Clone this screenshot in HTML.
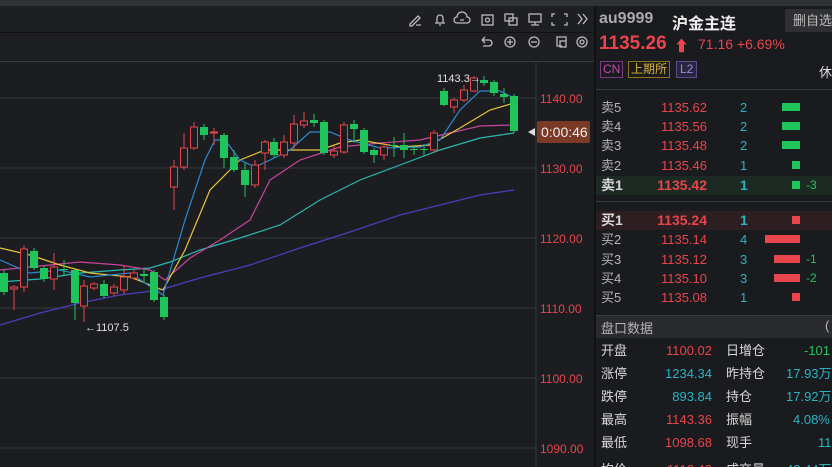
<!DOCTYPE html>
<html><head><meta charset="utf-8"><style>
*{margin:0;padding:0;box-sizing:border-box}
html,body{width:832px;height:467px;overflow:hidden}
body{background:#1c1d20;position:relative;font-family:"Liberation Sans","Noto Sans CJK SC",sans-serif}
.a{position:absolute;white-space:nowrap}
.r{color:#e8454c}.g{color:#1fc45a}.c{color:#2ab3c2}.w{color:#d8d8d8}.l{color:#b5b5b5}
.row{position:absolute;left:596px;width:236px;height:19px;font-size:13px;line-height:19px}
.row span{position:absolute}
.row .p{right:125px}
.row .v{right:120px;font-size:13px}
</style></head><body>
<div class="a" style="left:0;top:0;width:832px;height:6px;background:#303236"></div>
<div class="a" style="left:0;top:6px;width:596px;height:26px;background:#1e1f22"></div>
<div class="a" style="left:0;top:32px;width:596px;height:1px;background:#111"></div>
<div class="a" style="left:0;top:33px;width:596px;height:28px;background:#1e1f22"></div>
<div class="a" style="left:0;top:61px;width:596px;height:1px;background:#3a3b3e"></div>
<svg class="a" style="left:400px;top:0" width="196" height="62" fill="none" stroke="#bbb" stroke-width="1.3">
<path d="M10 24l8-8 2 2-8 8h-2zM16 25h5"/>
<path d="M35 23h10M37 23v-5a3 3 0 0 1 6 0v5M39 25h2"/>
<path d="M57 23h10a3 3 0 0 0 0-6 5 5 0 0 0-10 0 3 3 0 0 0 0 6zM60 20h4"/>
<rect x="82" y="15" width="11" height="10"/><circle cx="87.5" cy="20" r="2"/>
<rect x="105" y="14" width="8" height="7"/><rect x="109" y="18" width="8" height="7"/>
<rect x="129" y="14" width="12" height="8"/><path d="M135 22v3M131 25h8"/>
<path d="M152 17v-3h3M164 14h3v3M167 22v3h-3M155 25h-3v-3"/>
<path d="M178 14l4 5-4 5M183 14l4 5-4 5"/>
<path d="M82 40h7a3 3 0 0 1 0 6h-6M82 40l3-3M82 40l3 3"/>
<circle cx="110" cy="42" r="5"/><path d="M107 42h6M110 39v6"/>
<circle cx="134" cy="42" r="5"/><path d="M131 42h6"/>
<path d="M162 46h-5v-9h9v4"/><rect x="160" y="41" width="6" height="6"/>
<circle cx="182" cy="42" r="5"/><circle cx="182" cy="42" r="2"/>
</svg>
<svg class="a" style="left:0;top:62px" width="596" height="405">
<g stroke="#34363a" stroke-width="1">
<path d="M0 36h536M0 106h536M0 176h536M0 246h536M0 316h536M0 386h536M536 0v405"/>
</g>
<g font-size="12" fill="#e8454c" font-family="Liberation Sans">
<text x="540" y="41">1140.00</text><text x="540" y="111">1130.00</text><text x="540" y="181">1120.00</text><text x="540" y="251">1110.00</text><text x="540" y="321">1100.00</text><text x="540" y="391">1090.00</text>
</g>
<g transform="translate(0,-62)" fill="none" stroke-width="1.2">
<polyline stroke="#4a3fbf" points="0,325 40,313 80,303 120,295 160,290 200,278 250,265 300,248 350,232 400,215 440,205 480,195 514,190"/>
<polyline stroke="#29b8b0" points="0,282 40,279 80,273 120,270 150,268 170,262 200,250 240,238 280,225 320,200 360,180 400,165 440,150 480,138 514,133"/>
<polyline stroke="#c9449a" points="0,270 40,266 80,262 120,265 150,270 165,280 190,258 220,240 250,220 270,180 300,160 340,147 380,143 420,140 450,133 480,126 514,125"/>
<polyline stroke="#e8c53a" points="0,248 30,255 60,265 90,273 130,277 163,290 185,250 210,190 240,160 265,150 290,150 320,150 340,143 360,140 400,147 430,145 460,128 490,110 514,103"/>
<polyline stroke="#2d8ad0" points="0,260 30,273 60,270 90,277 130,273 163,295 185,220 205,160 215,140 225,140 240,160 255,167 270,160 290,150 310,132 330,132 350,140 380,148 420,147 440,140 460,110 480,91 500,91 514,98"/>
</g>
<g transform="translate(0,-62)" id="k"></g>
<text x="85" y="269" font-size="11" fill="#e0e0e0">←1107.5</text>
<text x="437" y="20" font-size="11" fill="#e0e0e0">1143.3→</text>
<path d="M528 70l7-4v8z" fill="#ddd"/>
<rect x="537" y="59" width="53" height="22" rx="2" fill="#7a3a26"/>
<text x="541" y="75" font-size="14" fill="#f0f0f0">0:00:46</text>
</svg>
<script>
var d=[[4,'g',273,292,270,295],[14,'r',287,289,285,310],[24,'r',249,287,245,292],[34,'g',251,268,248,270],[44,'g',268,279,266,282],[54,'r',267,279,253,290],[64,'g',269,270,260,275],[75,'g',270,303,270,320],[84,'r',286,306,280,322],[94,'r',284,288,282,290],[104,'g',284,296,280,298],[114,'r',287,293,284,296],[124,'r',277,290,266,294],[134,'r',273,278,270,280],[144,'g',274,276,268,282],[154,'g',272,300,270,302],[164,'g',297,317,295,320],[174,'r',167,187,160,210],[184,'r',148,167,133,170],[194,'r',127,148,122,150],[204,'g',127,135,124,140],[214,'r',132,133,128,145],[224,'g',135,158,133,168],[234,'g',157,170,150,172],[245,'g',170,185,163,197],[255,'r',165,185,160,188],[265,'r',142,153,140,170],[274,'g',142,155,138,158],[284,'r',142,155,135,158],[294,'r',124,143,115,150],[304,'r',121,125,112,128],[314,'g',120,123,114,127],[324,'g',122,153,120,155],[334,'r',151,155,145,158],[344,'r',125,152,122,154],[354,'g',124,129,120,143],[364,'g',130,152,128,154],[374,'g',150,155,148,163],[384,'r',147,155,142,160],[394,'g',145,146,137,157],[404,'g',145,150,133,158],[414,'g',149,150,145,155],[424,'g',149,150,144,156],[434,'r',133,150,130,153],[444,'g',91,105,88,106],[454,'r',100,107,98,113],[464,'r',90,100,85,102],[474,'r',78,91,76,92],[484,'g',80,83,76,86],[494,'g',82,93,80,96],[504,'g',94,97,88,103],[514,'g',96,131,94,133]];
var s='';d.forEach(function(c){var col=c[1]=='r'?'#e8454c':'#1fc45a';var t=Math.min(c[2],c[3]),b=Math.max(c[2],c[3]);if(b-t<1)b=t+1;
s+='<line x1="'+c[0]+'" x2="'+c[0]+'" y1="'+c[4]+'" y2="'+c[5]+'" stroke="'+col+'"/>';
s+=c[1]=='r'?'<rect x="'+(c[0]-3.5)+'" y="'+t+'" width="7" height="'+(b-t)+'" fill="#1c1d20" stroke="'+col+'"/>':'<rect x="'+(c[0]-4)+'" y="'+t+'" width="8" height="'+(b-t)+'" fill="'+col+'"/>';});
document.getElementById('k').innerHTML=s;
</script>
<div class="a" style="left:594px;top:6px;width:238px;height:461px;background:#1a1b1e;border-left:2px solid #101113"></div>
<div class="a" style="left:599px;top:10px;font-size:16px;font-weight:bold;color:#aaa">au9999</div>
<div class="a" style="left:672px;top:10px;font-size:16px;font-weight:bold;color:#eee">沪金主连</div>
<div class="a" style="left:785px;top:9px;width:50px;height:23px;background:#2f3033;border-radius:2px;font-size:13px;line-height:23px;padding-left:8px;color:#bbb">删自选</div>
<div class="a r" style="left:599px;top:33px;font-size:19px;font-weight:bold">1135.26</div>
<div class="a r" style="left:674px;top:35px;font-size:15px">&#x2B06;</div>
<div class="a r" style="left:698px;top:36px;font-size:14px">71.16 +6.69%</div>
<div class="a" style="left:600px;top:61px;font-size:12px;color:#c34ab0;border:1px solid #7a3a80;padding:0 2px;line-height:15px">CN</div>
<div class="a" style="left:628px;top:61px;font-size:12px;color:#d8b23a;border:1px solid #8a7420;padding:0 2px;line-height:15px">上期所</div>
<div class="a" style="left:676px;top:61px;font-size:12px;color:#9a8ad8;border:1px solid #5a4d8a;padding:0 3px;line-height:15px;background:#2a2440">L2</div>
<div class="a" style="left:819px;top:62px;font-size:13px;color:#ddd">休</div>
<div class="a" style="left:596px;top:89px;width:236px;height:1px;background:#3a3b3e"></div>
<div class="a" style="left:596px;top:176px;width:236px;height:19px;background:#1d2a24"></div>
<div class="a" style="left:596px;top:201px;width:236px;height:1px;background:#3a3b3e"></div>
<div class="a" style="left:596px;top:211px;width:236px;height:19px;background:#2d1e21"></div>
<div class="row" style="top:98px"><span class="l" style="left:5px">卖5</span><span class="r p">1135.62</span><span class="c" style="left:144px">2</span><span style="left:186px;top:5px;width:18px;height:8px;background:#1fc45a"></span></div>
<div class="row" style="top:117px"><span class="l" style="left:5px">卖4</span><span class="r p">1135.56</span><span class="c" style="left:144px">2</span><span style="left:186px;top:5px;width:18px;height:8px;background:#1fc45a"></span></div>
<div class="row" style="top:136px"><span class="l" style="left:5px">卖3</span><span class="r p">1135.48</span><span class="c" style="left:144px">2</span><span style="left:186px;top:5px;width:18px;height:8px;background:#1fc45a"></span></div>
<div class="row" style="top:156px"><span class="l" style="left:5px">卖2</span><span class="r p">1135.46</span><span class="c" style="left:144px">1</span><span style="left:196px;top:5px;width:8px;height:8px;background:#1fc45a"></span></div>
<div class="row" style="top:176px;font-weight:bold;font-size:14px"><span class="w" style="left:5px">卖1</span><span class="r p">1135.42</span><span class="c" style="left:144px">1</span><span style="left:196px;top:5px;width:8px;height:8px;background:#1fc45a"></span><span class="g" style="left:210px;font-weight:normal;font-size:12px">-3</span></div>
<div class="row" style="top:211px;font-weight:bold;font-size:14px"><span class="w" style="left:5px">买1</span><span class="r p">1135.24</span><span class="c" style="left:144px">1</span><span style="left:196px;top:5px;width:8px;height:8px;background:#e8454c"></span></div>
<div class="row" style="top:230px"><span class="l" style="left:5px">买2</span><span class="r p">1135.14</span><span class="c" style="left:144px">4</span><span style="left:169px;top:5px;width:35px;height:8px;background:#e8454c"></span></div>
<div class="row" style="top:250px"><span class="l" style="left:5px">买3</span><span class="r p">1135.12</span><span class="c" style="left:144px">3</span><span style="left:178px;top:5px;width:26px;height:8px;background:#e8454c"></span><span class="g" style="left:210px;font-size:12px">-1</span></div>
<div class="row" style="top:269px"><span class="l" style="left:5px">买4</span><span class="r p">1135.10</span><span class="c" style="left:144px">3</span><span style="left:178px;top:5px;width:26px;height:8px;background:#e8454c"></span><span class="g" style="left:210px;font-size:12px">-2</span></div>
<div class="row" style="top:288px"><span class="l" style="left:5px">买5</span><span class="r p">1135.08</span><span class="c" style="left:144px">1</span><span style="left:196px;top:5px;width:8px;height:8px;background:#e8454c"></span></div>
<div class="a" style="left:596px;top:315px;width:236px;height:23px;background:#2a2b2e;border-top:1px solid #3a3b3e"></div>
<div class="a l" style="left:601px;top:318px;font-size:13px">盘口数据</div>
<div class="a l" style="left:825px;top:318px;font-size:13px">(</div>
<div class="row" style="top:340px;height:22px;line-height:22px"><span class="w" style="left:5px">开盘</span><span class="r v">1100.02</span><span class="w" style="left:130px">日增仓</span><span class="g" style="left:208px">-101</span></div>
<div class="row" style="top:363px;height:22px;line-height:22px"><span class="w" style="left:5px">涨停</span><span class="c v">1234.34</span><span class="w" style="left:130px">昨持仓</span><span class="c" style="left:190px">17.93万</span></div>
<div class="row" style="top:386px;height:22px;line-height:22px"><span class="w" style="left:5px">跌停</span><span class="c v">893.84</span><span class="w" style="left:130px">持仓</span><span class="c" style="left:190px">17.92万</span></div>
<div class="row" style="top:409px;height:22px;line-height:22px"><span class="w" style="left:5px">最高</span><span class="r v">1143.36</span><span class="w" style="left:130px">振幅</span><span class="c" style="left:197px">4.08%</span></div>
<div class="row" style="top:432px;height:22px;line-height:22px"><span class="w" style="left:5px">最低</span><span class="r v">1098.68</span><span class="w" style="left:130px">现手</span><span class="c" style="left:222px">11</span></div>
<div class="row" style="top:459px;height:22px;line-height:22px"><span class="w" style="left:5px">均价</span><span class="r v">1118.42</span><span class="w" style="left:130px">成交量</span><span class="c" style="left:190px">43.44万</span></div>
</body></html>
